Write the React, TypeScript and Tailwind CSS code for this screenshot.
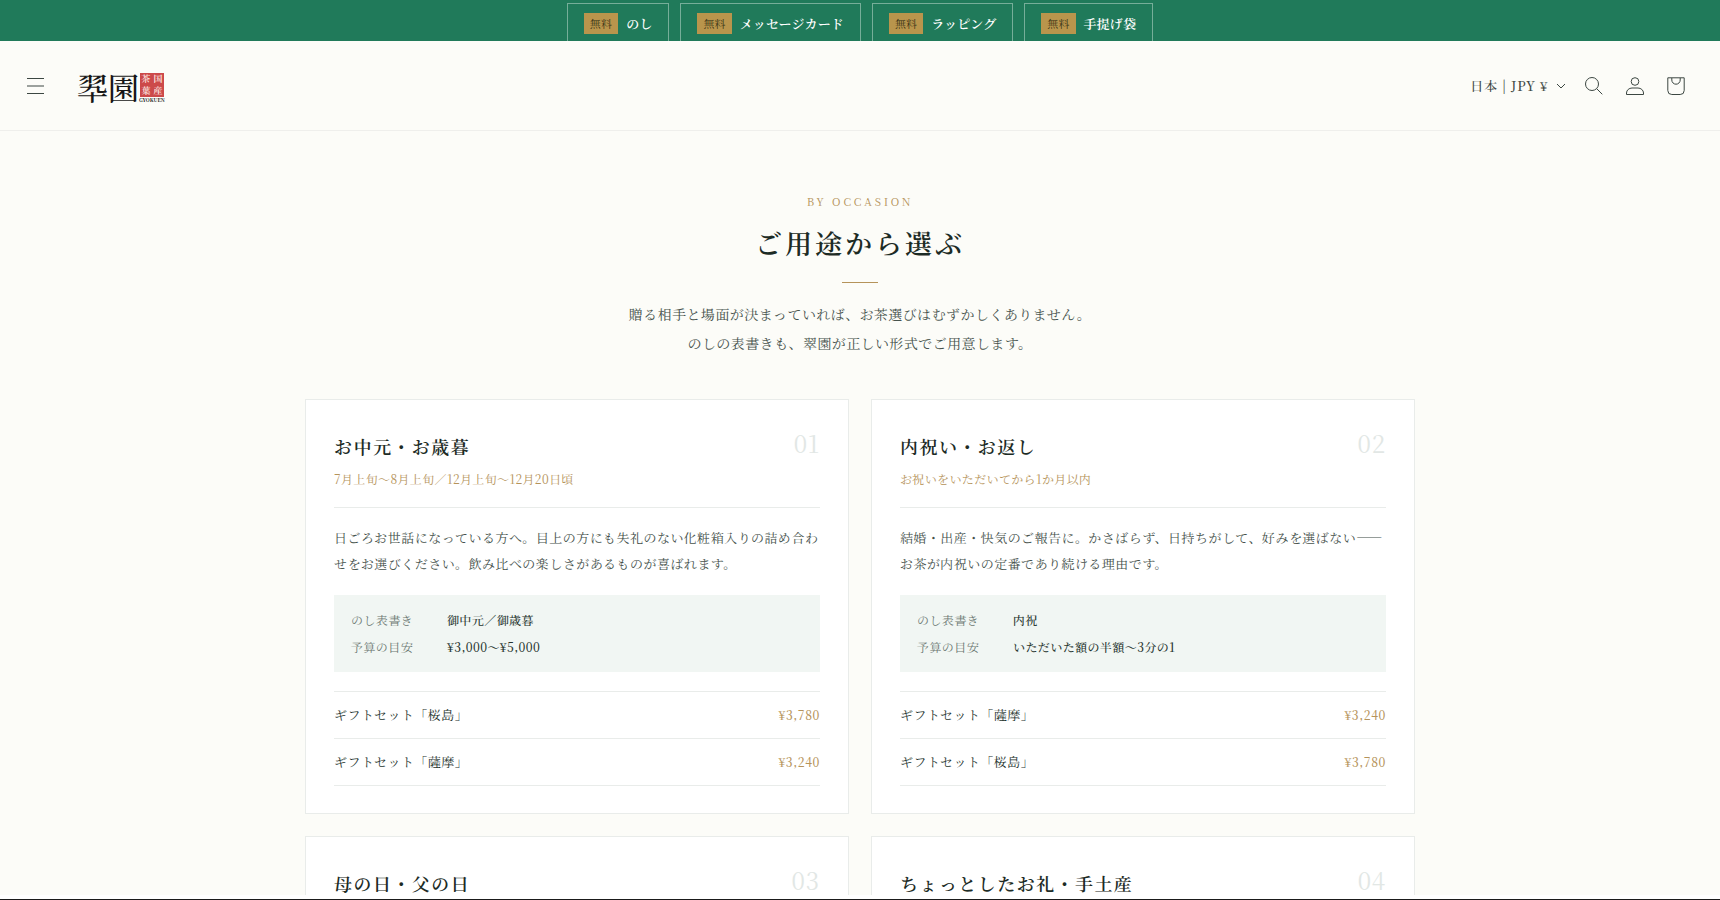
import React from "react";

interface Product {
  name: string;
  price: string;
}

interface Occasion {
  no: string;
  title: string;
  season?: string;
  description?: string;
  noshi?: string;
  budget?: string;
  products?: Product[];
}

const SERVICES = ["のし", "メッセージカード", "ラッピング", "手提げ袋"];

const SAKURAJIMA = { name: "ギフトセット「桜島」", price: "¥3,780" };
const SATSUMA = { name: "ギフトセット「薩摩」", price: "¥3,240" };

const OCCASIONS: Occasion[] = [
  {
    no: "01",
    title: "お中元・お歳暮",
    season: "7月上旬〜8月上旬／12月上旬〜12月20日頃",
    description:
      "日ごろお世話になっている方へ。目上の方にも失礼のない化粧箱入りの詰め合わせをお選びください。飲み比べの楽しさがあるものが喜ばれます。",
    noshi: "御中元／御歳暮",
    budget: "¥3,000〜¥5,000",
    products: [SAKURAJIMA, SATSUMA],
  },
  {
    no: "02",
    title: "内祝い・お返し",
    season: "お祝いをいただいてから1か月以内",
    description:
      "結婚・出産・快気のご報告に。かさばらず、日持ちがして、好みを選ばない——お茶が内祝いの定番であり続ける理由です。",
    noshi: "内祝",
    budget: "いただいた額の半額〜3分の1",
    products: [SATSUMA, SAKURAJIMA],
  },
  { no: "03", title: "母の日・父の日" },
  { no: "04", title: "ちょっとしたお礼・手土産" },
];

function AnnouncementBar() {
  return (
    <div className="h-[41px] overflow-hidden bg-[#207a5a] pt-[3px]">
      <ul className="flex justify-center gap-[11px]">
        {SERVICES.map((service) => (
          <li
            key={service}
            className="flex items-center gap-2 border border-[#76ae99] px-4 py-[9px] text-[13px] leading-5 font-semibold tracking-[0.01em] text-white"
          >
            <span className="bg-[#b9954c] px-[6px] text-[11px] leading-[21px] font-normal text-[#3b3518]">
              無料
            </span>
            {service}
          </li>
        ))}
      </ul>
    </div>
  );
}

function Logo() {
  return (
    <a href="/" className="flex items-start text-[#161616]">
      <span className="text-[31px] leading-[30px] font-medium">翆園</span>
      <span className="flex flex-col items-center pt-px">
        <span className="grid h-6 w-6 grid-cols-2 bg-[#cc4a4a] text-center text-[9px] leading-3 font-bold text-[#f8dcd8]">
          <span>茶</span>
          <span>国</span>
          <span>葉</span>
          <span>産</span>
        </span>
        <span className="text-[5px] leading-[6px] font-bold">GYOKUEN</span>
      </span>
    </a>
  );
}

function Header() {
  return (
    <header className="flex h-[90px] items-center border-b border-[#efefec] px-[26px]">
      <button type="button" aria-label="メニュー">
        <svg width="20" height="20" viewBox="0 0 20 20" fill="none" stroke="#3c4742">
          <path d="M1 2.5h17M1 10h17M1 17.5h17" />
        </svg>
      </button>
      <div className="ml-[31px] pt-1">
        <Logo />
      </div>
      <div className="ml-auto flex items-center gap-[23px] pr-[9px]">
        <button
          type="button"
          className="-mr-1 flex items-center gap-2 text-[13px] leading-5 font-medium tracking-[0.06em] text-[#3c4742]"
        >
          日本 | JPY ¥
          <svg width="10" height="6" viewBox="0 0 10 6" fill="none" stroke="currentColor">
            <path d="M1 1l4 4 4-4" />
          </svg>
        </button>
        <button type="button" aria-label="検索">
          <svg width="18" height="18" viewBox="0 0 18 18" fill="none" stroke="#3c4742">
            <circle cx="7" cy="7" r="6.5" />
            <path d="M11.7 11.7l5.6 5.6" />
          </svg>
        </button>
        <a href="/account" aria-label="アカウント">
          <svg width="18" height="18" viewBox="0 0 18 18" fill="none" stroke="#3c4742">
            <circle cx="9" cy="4.5" r="3.8" />
            <path d="M.5 17.5V16c0-2.800 2.600-5 5.500-5h6c2.900 0 5.500 2.200 5.500 5v1.500z" />
          </svg>
        </a>
        <a href="/cart" aria-label="カート">
          <svg width="18" height="18" viewBox="0 0 18 18" fill="none" stroke="#3c4742">
            <path d="M.8 .8h16.400v12.700a4 4 0 0 1-4 4H4.800a4 4 0 0 1-4-4z" />
            <path d="M4.800 1v2a4.200 4.200 0 0 0 8.400 0V1" />
          </svg>
        </a>
      </div>
    </header>
  );
}

function OccasionCard({ occasion }: { occasion: Occasion }) {
  return (
    <article className="border border-[#e9ecea] bg-white px-7 pt-7 pb-[27px]">
      <div className="flex items-start justify-between pt-[2px]">
        <h2 className="text-[18px] leading-8 font-semibold tracking-[0.08em] text-[#1c2b25]">
          {occasion.title}
        </h2>
        <span className="text-[24px] leading-[26px] tracking-[0.035em] text-[#e2e7e5]">
          {occasion.no}
        </span>
      </div>
      {occasion.season && (
        <p className="mt-[5px] text-[12px] leading-6 tracking-[0.03em] text-[#b5935a]">
          {occasion.season}
        </p>
      )}
      {occasion.description && (
        <p className="mt-4 border-t border-[#e9ecea] pt-[17px] text-[13px] leading-[26px] tracking-[0.035em] text-[#46524c]">
          {occasion.description}
        </p>
      )}
      {occasion.noshi && (
        <dl className="mt-[18px] grid grid-cols-[96px_1fr] gap-y-[5px] bg-[#f1f6f3] px-[17px] py-[14px] text-[12px] leading-[22px] tracking-[0.035em]">
          <dt className="text-[#6b7771]">のし表書き</dt>
          <dd className="font-medium text-[#26342e]">{occasion.noshi}</dd>
          <dt className="text-[#6b7771]">予算の目安</dt>
          <dd className="font-medium text-[#26342e]">{occasion.budget}</dd>
        </dl>
      )}
      {occasion.products && (
        <ul className="mt-[19px] border-t border-[#e9ecea]">
          {occasion.products.map((product) => (
            <li key={product.name} className="border-b border-[#e9ecea]">
              <a
                href="#"
                className="flex items-center justify-between text-[13px] leading-[46px] tracking-[0.035em] text-[#26342e]"
              >
                {product.name}
                <span className="text-[12px] font-medium tracking-[0.05em] text-[#b5935a]">
                  {product.price}
                </span>
              </a>
            </li>
          ))}
        </ul>
      )}
    </article>
  );
}

export default function App() {
  return (
    <div
      lang="ja"
      className="min-h-screen bg-[#fcfcf8] font-['Noto_Serif_JP','Noto_Serif_CJK_JP','Liberation_Serif','Noto_Sans_CJK_JP',serif]"
    >
      <AnnouncementBar />
      <Header />
      <main className="mx-auto max-w-[1110px] pt-[60px]">
        <section className="flex flex-col items-center text-center">
          <p className="text-[11px] leading-5 tracking-[0.25em] text-[#b5935a]">BY OCCASION</p>
          <h1 className="mt-3 text-[27px] leading-10 font-semibold tracking-[0.11em] text-[#1c2b25]">
            ご用途から選ぶ
          </h1>
          <hr className="mt-[19px] w-9 border-[#b5935a]" />
          <p className="mt-[17px] text-[14px] leading-[29px] tracking-[0.03em] text-[#46524c]">
            贈る相手と場面が決まっていれば、お茶選びはむずかしくありません。
            <br />
            のしの表書きも、翠園が正しい形式でご用意します。
          </p>
        </section>
        <div className="mt-[41px] grid grid-cols-2 gap-[22px]">
          {OCCASIONS.map((occasion) => (
            <OccasionCard key={occasion.no} occasion={occasion} />
          ))}
        </div>
      </main>
      <div className="fixed inset-x-0 bottom-0 h-[5px] border-b border-[#1a1a1a] bg-white" />
    </div>
  );
}
